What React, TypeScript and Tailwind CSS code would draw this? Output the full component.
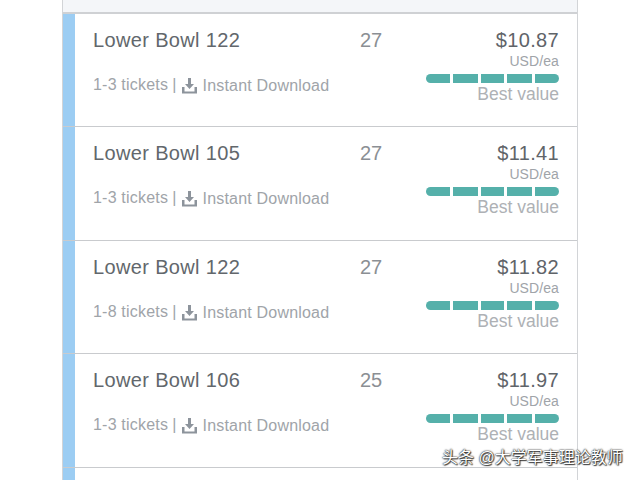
import React from "react";

const listings = [
  { section: "Lower Bowl 122", qty: 27, tickets: "1-3 tickets", price: "$10.87" },
  { section: "Lower Bowl 105", qty: 27, tickets: "1-3 tickets", price: "$11.41" },
  { section: "Lower Bowl 122", qty: 27, tickets: "1-8 tickets", price: "$11.82" },
  { section: "Lower Bowl 106", qty: 25, tickets: "1-3 tickets", price: "$11.97" },
];

function DownloadIcon() {
  return (
    <svg width="17" height="17" viewBox="0 0 17 17" className="shrink-0">
      <path d="M7 1h3v6h3l-4.500 5L4 7h3z" fill="#8d949c" />
      <path d="M1 10h2.500v4.500h10V10H16v6.500H1z" fill="#8d949c" />
    </svg>
  );
}

function ValueBar() {
  return (
    <div className="flex gap-[3px] w-[133px] h-[9px] mt-[4px]">
      <div className="w-[24px] bg-[#55b0aa] rounded-l-full" />
      <div className="w-[25px] bg-[#55b0aa]" />
      <div className="w-[23px] bg-[#55b0aa]" />
      <div className="w-[25px] bg-[#55b0aa]" />
      <div className="w-[24px] bg-[#55b0aa] rounded-r-full" />
    </div>
  );
}

function Row({ section, qty, tickets, price }: (typeof listings)[number]) {
  return (
    <div className="h-[113.4px] border-b border-[#c9cbce] flex">
      <div className="w-[12px] bg-[#9ccdf3] shrink-0" />
      <div className="flex-1 flex pl-[18px] pr-[19px] pt-[14px]">
        <div className="w-[267px]">
          <div className="text-[20px] leading-[25px] tracking-[0.35px] text-[#62676c]">{section}</div>
          <div className="mt-[22px] flex items-center text-[16px] leading-[20px] tracking-[0.2px] text-[#a0a4a9]">
            <span className="-mt-[1px]">{tickets}</span>
            <span className="ml-[4px] mr-[5px] -mt-[1px]">|</span>
            <DownloadIcon />
            <span className="ml-[4px] mt-[1px]">Instant Download</span>
          </div>
        </div>
        <div className="w-[66px] text-[20px] leading-[25px] text-[#8b8f94]">{qty}</div>
        <div className="flex-1 flex flex-col items-end">
          <div className="text-[20px] leading-[25px] tracking-[0.35px] text-[#5f6469]">{price}</div>
          <div className="text-[14px] leading-[18px] tracking-[0.1px] text-[#a0a4a9] mt-[-1px]">USD/ea</div>
          <ValueBar />
          <div className="text-[17.5px] leading-[22px] text-[#aeb1b5]">Best value</div>
        </div>
      </div>
    </div>
  );
}

export default function App() {
  return (
    <div
      className="relative w-[634px] h-[480px] overflow-hidden bg-white"
      style={{ fontFamily: '"Liberation Sans", "Noto Sans CJK SC", sans-serif' }}
    >
      <div className="ml-[62px] w-[516px] h-[480px] border-r border-l border-[#d2d4d7]">
        <div className="h-[14px] bg-[#f4f6f9] border-b-2 border-[#cfd1d4]" />
        {listings.map((item, i) => (
          <Row key={i} {...item} />
        ))}
        <div className="flex h-[20px]">
          <div className="w-[12px] bg-[#9ccdf3]" />
        </div>
      </div>
      <div
        className="absolute left-[442px] top-[448px] text-[16px] leading-[20px] text-white"
        style={{ textShadow: "0 0 1px #222, 0 0 2px #222, 1px 1px 1px #444" }}
      >
        头条 @大学军事理论教师
      </div>
    </div>
  );
}
